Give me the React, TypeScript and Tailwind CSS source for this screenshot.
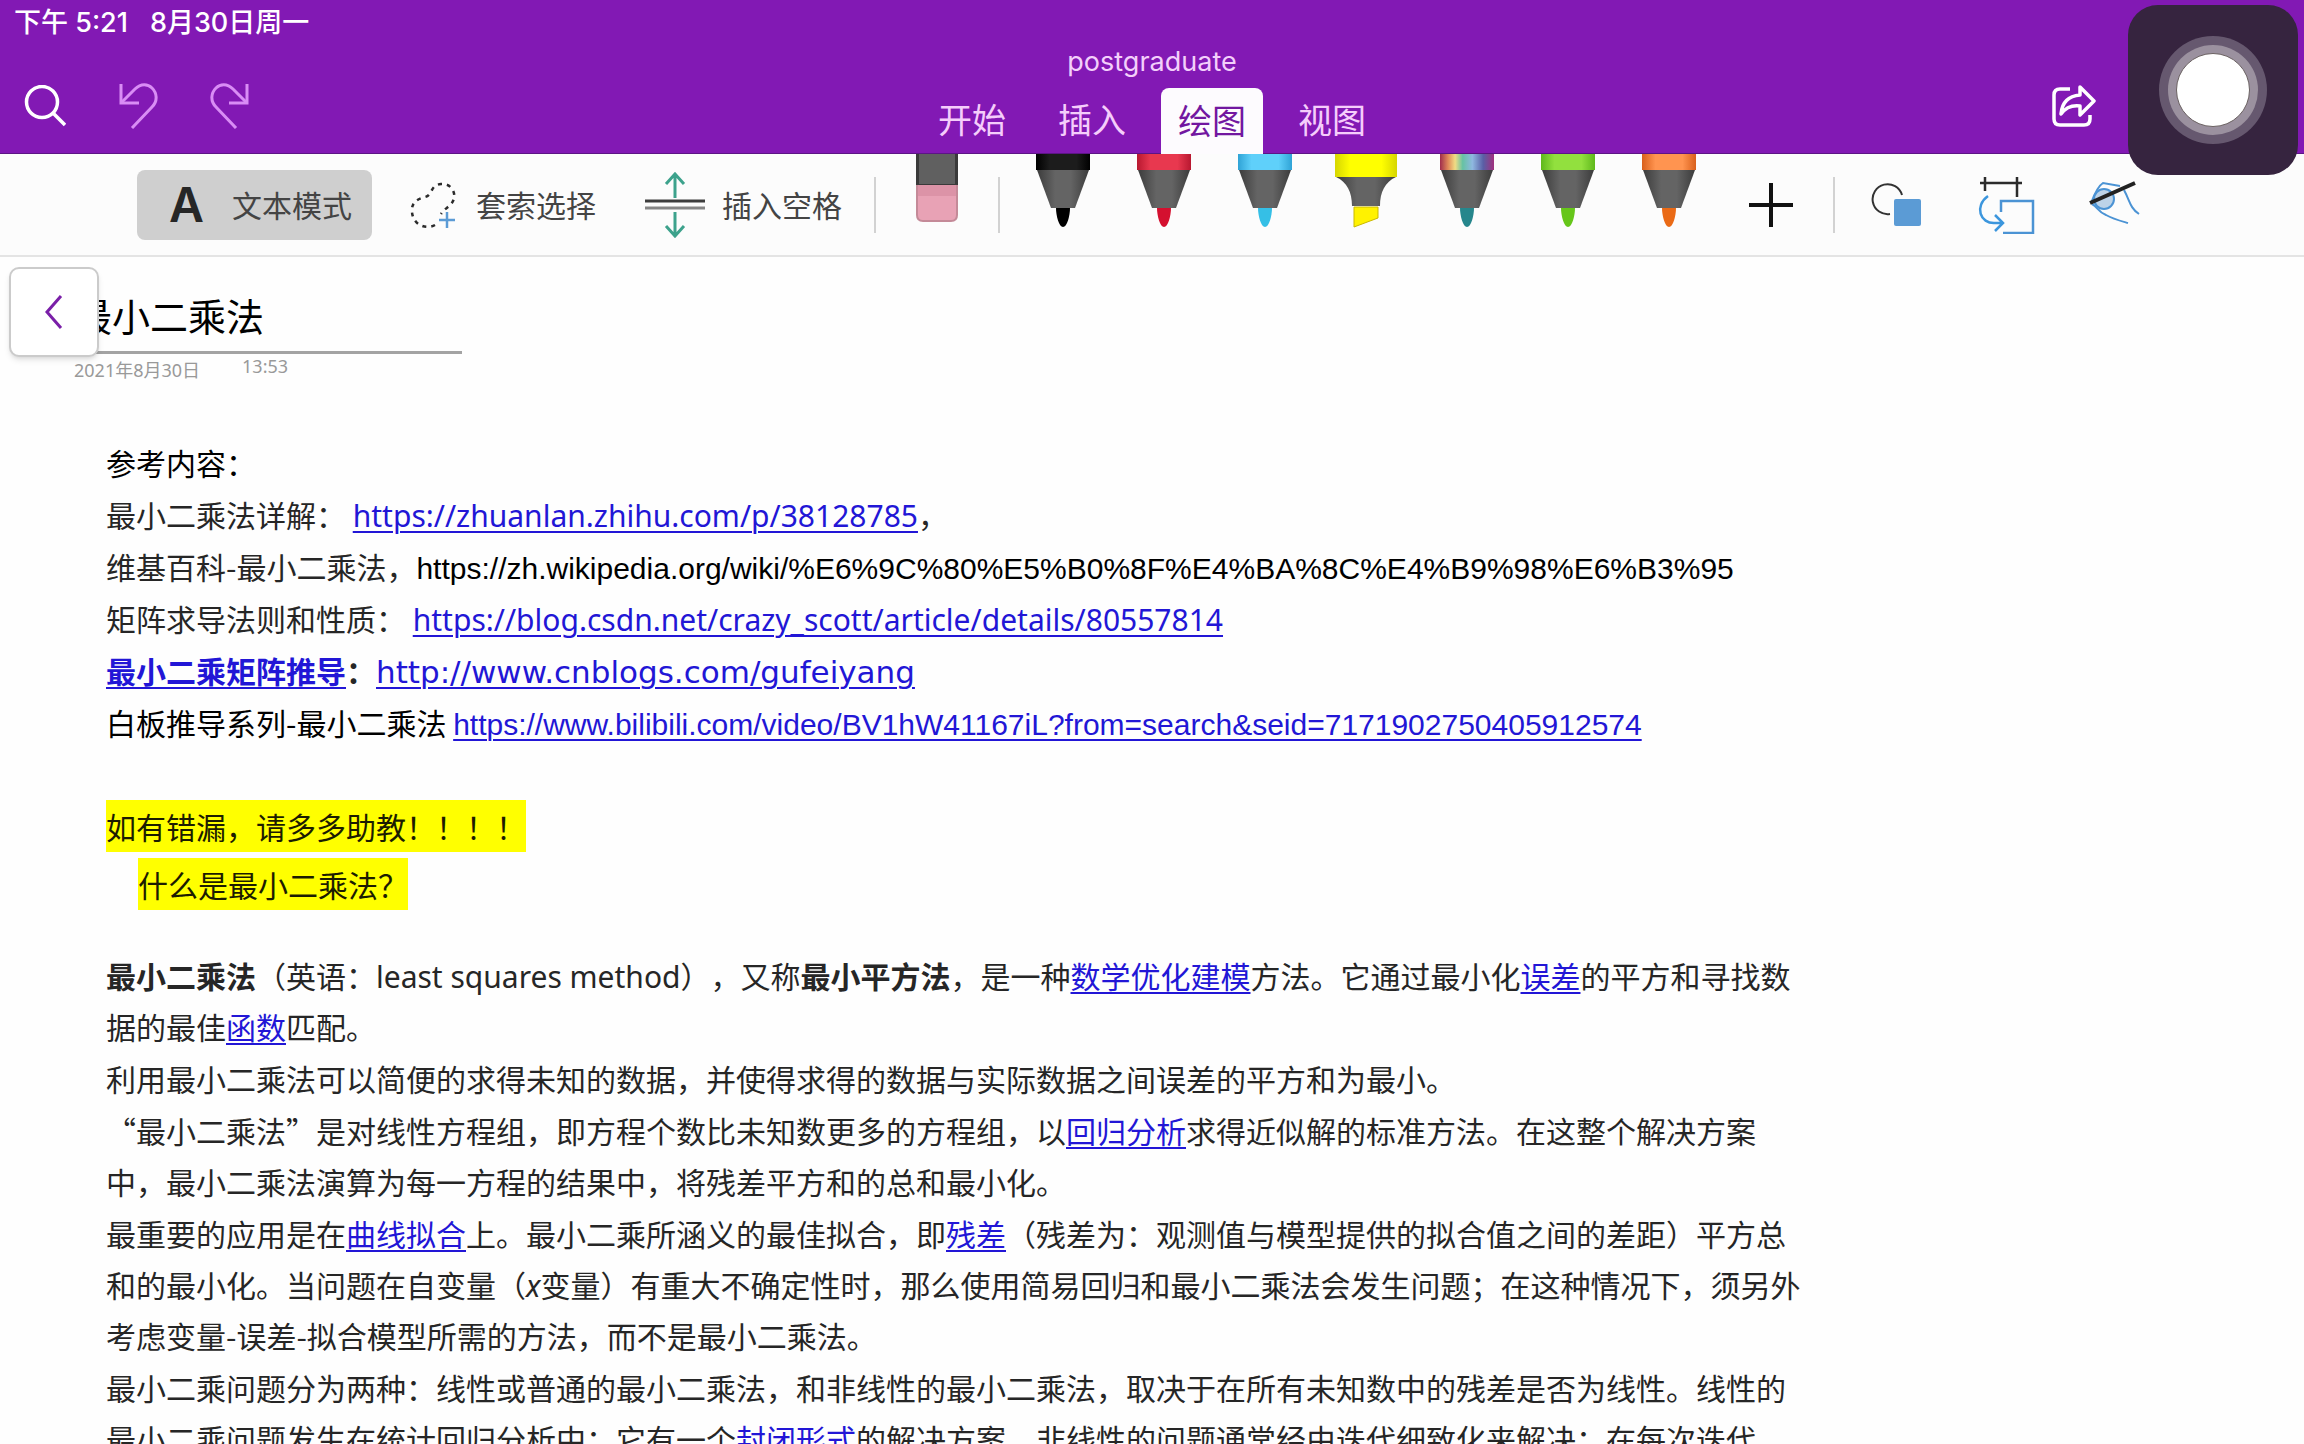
import type { ReactNode } from "react";

const tabs = ["开始", "插入", "绘图", "视图"];

const pens = [
  { name: "black", edge: "#000000", mid: "#1c1c1c", tip: "#000000" },
  { name: "red", edge: "#b81830", mid: "#e8384f", tip: "#d4102f" },
  { name: "blue", edge: "#2fa3d6", mid: "#5fd0fa", tip: "#35bfe6" },
  { name: "highlighter", edge: "#d6d600", mid: "#ffff00", tip: "#fff200" },
  { name: "rainbow", edge: "#8a2f6a", mid: "#8fc4dc", tip: "#26868c" },
  { name: "green", edge: "#5fb81c", mid: "#92e03e", tip: "#66c61a" },
  { name: "orange", edge: "#d9601c", mid: "#ff9450", tip: "#ea6a16" },
];

const Divider = () => <div className="h-14 w-[2px] shrink-0 bg-[#d2d2d2]" />;

const Pen = ({ name, edge, mid, tip }: (typeof pens)[number]) => (
  <svg viewBox="0 0 62 76" className="h-[76px] w-[62px]">
    <defs>
      <linearGradient id={`cap-${name}`}>
        {name === "rainbow" ? (
          <>
            <stop offset="0" stopColor="#a02c4c" />
            <stop offset="0.15" stopColor="#e08a5a" />
            <stop offset="0.28" stopColor="#f0dc84" />
            <stop offset="0.42" stopColor="#66c2a4" />
            <stop offset="0.6" stopColor="#8fb8e0" />
            <stop offset="0.8" stopColor="#5a5fa6" />
            <stop offset="1" stopColor="#a0307e" />
          </>
        ) : (
          <>
            <stop offset="0" stopColor={edge} />
            <stop offset="0.25" stopColor={mid} />
            <stop offset="0.75" stopColor={mid} />
            <stop offset="1" stopColor={edge} />
          </>
        )}
      </linearGradient>
      <linearGradient id={`body-${name}`}>
        <stop offset="0" stopColor="#3c3c3c" />
        <stop offset="0.35" stopColor="#646464" />
        <stop offset="0.65" stopColor="#646464" />
        <stop offset="1" stopColor="#3c3c3c" />
      </linearGradient>
    </defs>
    {name === "highlighter" ? (
      <>
        <path d="M0 0H62V23H0Z" fill={`url(#cap-${name})`} />
        <path d="M1 23H61C50 28 45 38 45 52H17C17 38 12 28 1 23Z" fill={`url(#body-${name})`} />
        <path d="M19 53H43V64L19 73Z" fill={tip} stroke="#c9b800" />
      </>
    ) : (
      <>
        <path d="M4 0H58V16H4Z" fill={`url(#cap-${name})`} />
        <path d="M5 16H57L43 54H19Z" fill={`url(#body-${name})`} />
        <path d="M24 54H38C38 62 35 73 31 73C27 73 24 62 24 54Z" fill={tip} />
      </>
    )}
  </svg>
);

const Link = ({ children, className = "" }: { children: ReactNode; className?: string }) => (
  <a
    href="#"
    className={`text-[#2216d6] underline decoration-2 underline-offset-4 ${className}`}
  >
    {children}
  </a>
);

const Header = () => (
  <header className="border-b border-[#5c1585] bg-[#8219b4] text-white">
    <div className="flex h-[46px] items-center gap-[22px] px-[14px] font-['Inter','Noto_Sans_CJK_SC',sans-serif] text-[27px] font-medium">
      <span>下午 5:21</span>
      <span>8月30日周一</span>
    </div>
    <div className="grid grid-cols-[1fr_auto_1fr]">
      <div className="flex items-center gap-[52px] pt-3 pl-6">
        <button aria-label="搜索">
          <svg viewBox="0 0 42 42" className="size-[42px]" fill="none" stroke="white" strokeWidth="3.5">
            <circle cx="18" cy="17" r="15.500" />
            <path d="M29 28L41 40" />
          </svg>
        </button>
        <button aria-label="撤消">
          <svg viewBox="0 0 40 46" className="h-[46px] w-10" fill="none" stroke="#d98df5" strokeWidth="3">
            <path d="M3 1V20H21" />
            <path d="M3 20L17 6C23 0 30 1 34 5C39 10 40 18 34 24L14 45" />
          </svg>
        </button>
        <button aria-label="重做">
          <svg viewBox="0 0 40 46" className="h-[46px] w-10" fill="none" stroke="#d98df5" strokeWidth="3">
            <path d="M37 1V20H19" />
            <path d="M37 20L23 6C17 0 10 1 6 5C1 10 0 18 6 24L26 45" />
          </svg>
        </button>
      </div>
      <div className="flex flex-col items-center">
        <p className="font-['Inter',sans-serif] text-[27px] leading-8 text-[#f3cffb]">postgraduate</p>
        <nav className="mt-[10px] flex gap-[18px] text-[34px]">
          {tabs.map((tab) => (
            <button
              key={tab}
              className={
                tab === "绘图"
                  ? "-mb-px h-[66px] rounded-t-lg bg-[#fdfbfe] px-[17px] pb-1 text-[#7217a0]"
                  : "h-[65px] px-[17px] pb-1 text-[#f5cdfb]"
              }
            >
              {tab}
            </button>
          ))}
        </nav>
      </div>
      <div className="flex items-center justify-end pt-3 pr-52">
        <button aria-label="共享">
          <svg viewBox="0 0 44 44" className="size-11" fill="none" stroke="white" strokeWidth="3.5" strokeLinejoin="round">
            <path d="M18 5H8Q2 5 2 11V35Q2 41 8 41H32Q38 41 38 35V31" />
            <path d="M28 3L42 17L28 31V22C20 21 14 23 9 30C10 18 16 12 28 11Z" />
          </svg>
        </button>
      </div>
    </div>
  </header>
);

const Toolbar = () => (
  <div className="flex h-[103px] items-center border-b-2 border-[#e4e4e4] bg-[#fcfcfc] pl-[137px] text-[30px] text-[#444]">
    <button className="flex h-[70px] items-center gap-7 rounded-lg bg-[#cfcfcf] pr-5 pl-8">
      <span className="w-[35px] text-center font-['Inter',sans-serif] text-[48px] font-semibold text-[#262626]">A</span>
      文本模式
    </button>
    <button className="ml-9 flex items-center gap-5">
      <svg viewBox="0 0 48 48" className="size-12" fill="none">
        <path
          d="M27 44C18 49 5 44 4 31C3 22 9 18 17 16C25 14 22 4 33 3C43 2 49 12 45 20C43 25 37 27 33 33"
          stroke="#2b2b2b"
          strokeWidth="2.5"
          strokeDasharray="4 5"
        />
        <path d="M39 31V47M31 39H47" stroke="#5b9bd5" strokeWidth="2.500" />
      </svg>
      套索选择
    </button>
    <button className="ml-12 flex items-center gap-4">
      <svg viewBox="0 0 62 66" className="h-[66px] w-[62px]" fill="none" strokeWidth="3">
        <path d="M31 2V26M22 12L31 2L40 12M31 40V64M22 54L31 64L40 54" stroke="#3da28c" />
        <path d="M1 29H61" stroke="#3d3d3d" />
        <path d="M1 36H61" stroke="#858585" />
      </svg>
      插入空格
    </button>
    <div className="ml-8">
      <Divider />
    </div>
    <button aria-label="橡皮擦" className="ml-10 self-start">
      <svg viewBox="0 0 42 70" className="h-[70px] w-[42px]">
        <path d="M1 26H41V61Q41 67 35 67H7Q1 67 1 61Z" fill="#e8a2b5" stroke="#c48a98" strokeWidth="2" />
        <path d="M2 27H40V42H2Z" fill="#dc93a7" />
        <path d="M0 0H42V31H0Z" fill="#3a3a3a" />
        <path d="M3 0H39V30H3Z" fill="#606060" />
      </svg>
    </button>
    <div className="ml-10">
      <Divider />
    </div>
    <div className="ml-3 flex self-start">
      {pens.map((pen) => (
        <button key={pen.name} aria-label={pen.name} className="flex w-[101px] justify-center">
          <Pen {...pen} />
        </button>
      ))}
    </div>
    <button aria-label="添加笔" className="ml-[30px]">
      <svg viewBox="0 0 44 44" className="size-11" stroke="#111" strokeWidth="4">
        <path d="M22 0V44M0 22H44" />
      </svg>
    </button>
    <div className="ml-10">
      <Divider />
    </div>
    <div className="ml-9 flex items-center gap-[54px]">
      <button aria-label="形状">
        <svg viewBox="0 0 52 46" className="h-[46px] w-[52px]" fill="none">
          <path d="M19 32A15 15 0 1 1 31 13" stroke="#333" strokeWidth="2" />
          <rect x="23" y="17" width="27" height="27" rx="2" fill="#5b9bd5" />
        </svg>
      </button>
      <button aria-label="墨迹转换为形状">
        <svg viewBox="0 0 58 58" className="size-[58px]" fill="none" strokeWidth="2.5">
          <path d="M3 7H45M8 1V15M40 1V21" stroke="#2b2b2b" />
          <path d="M24 36V25H56V57H26" stroke="#4b93d4" />
          <path d="M11 20C-3 30 3 48 18 47H26M18 39L26 47L18 55" stroke="#3c96dd" />
        </svg>
      </button>
      <button aria-label="用手指绘图" className="pb-1">
        <svg viewBox="0 0 52 44" className="h-11 w-[52px]" fill="none">
          <circle cx="15" cy="18" r="10" fill="#bdd3e8" stroke="#4b93d4" strokeWidth="2" />
          <path
            d="M2 22C5 14 9 5 14 2L31 5M35 9C41 20 41 27 50 33M3 23C9 26 9 31 17 34C24 38 32 40 39 42"
            stroke="#4b93d4"
            strokeWidth="2"
          />
          <path d="M1 22L46 2" stroke="#222" strokeWidth="4" />
        </svg>
      </button>
    </div>
  </div>
);

const NoteTitle = () => (
  <div className="pt-[30px] pl-[74px]">
    <div className="w-[388px] border-b-[3px] border-[#a3a3a3] pb-2">
      <h1 className="text-[38px] leading-[56px] text-black">最小二乘法</h1>
    </div>
    <div className="flex gap-[42px] font-['Noto_Sans','Noto_Sans_CJK_SC',sans-serif] text-[18px] leading-6 text-[#999]">
      <span className="pt-1">2021年8月30日</span>
      <span>13:53</span>
    </div>
  </div>
);

const References = () => (
  <div className="leading-[52px]">
    <p className="text-black">参考内容：</p>
    <p>
      最小二乘法详解：{" "}
      <Link className="font-['Noto_Sans',sans-serif] leading-8">https://zhuanlan.zhihu.com/p/38128785</Link>，
    </p>
    <p>
      维基百科-最小二乘法，
      <span className="font-['Liberation_Sans',sans-serif] leading-8 text-black">
        https://zh.wikipedia.org/wiki/%E6%9C%80%E5%B0%8F%E4%BA%8C%E4%B9%98%E6%B3%95
      </span>
    </p>
    <p>
      矩阵求导法则和性质：{" "}
      <Link className="font-['Noto_Sans',sans-serif] leading-8">
        https://blog.csdn.net/crazy_scott/article/details/80557814
      </Link>
    </p>
    <p>
      <Link className="font-bold">最小二乘矩阵推导</Link>
      <b>：</b>
      <Link className="font-['DejaVu_Sans',sans-serif] text-[31px] leading-8">http://www.cnblogs.com/gufeiyang</Link>
    </p>
    <p className="text-black">
      白板推导系列-最小二乘法{" "}
      <Link className="font-['Liberation_Sans',sans-serif] leading-8">
        https://www.bilibili.com/video/BV1hW41167iL?from=search&seid=7171902750405912574
      </Link>
    </p>
  </div>
);

const Article = () => (
  <div className="mt-10 flex max-w-[1700px] flex-col gap-px leading-[51px] [text-spacing-trim:space-all]">
    <p>
      <b>最小二乘法</b>（英语：
      <span className="font-['Noto_Sans',sans-serif] leading-8">least squares method</span>），又称
      <b>最小平方法</b>，是一种<Link>数学优化建模</Link>方法。它通过最小化<Link>误差</Link>
      的平方和寻找数据的最佳<Link>函数</Link>匹配。
    </p>
    <p>利用最小二乘法可以简便的求得未知的数据，并使得求得的数据与实际数据之间误差的平方和为最小。</p>
    <p>
      “最小二乘法”是对线性方程组，即方程个数比未知数更多的方程组，以<Link>回归分析</Link>
      求得近似解的标准方法。在这整个解决方案中，最小二乘法演算为每一方程的结果中，将残差平方和的总和最小化。
    </p>
    <p>
      最重要的应用是在<Link>曲线拟合</Link>上。最小二乘所涵义的最佳拟合，即<Link>残差</Link>
      （残差为：观测值与模型提供的拟合值之间的差距）平方总和的最小化。当问题在自变量（
      <i className="font-['Noto_Sans',sans-serif] leading-8">x</i>
      变量）有重大不确定性时，那么使用简易回归和最小二乘法会发生问题；在这种情况下，须另外考虑变量-误差-拟合模型所需的方法，而不是最小二乘法。
    </p>
    <p>
      最小二乘问题分为两种：线性或普通的最小二乘法，和非线性的最小二乘法，取决于在所有未知数中的残差是否为线性。线性的最小二乘问题发生在统计回归分析中；它有一个
      <Link>封闭形式</Link>的解决方案。非线性的问题通常经由迭代细致化来解决；在每次迭代
    </p>
  </div>
);

export default function App() {
  return (
    <div
      lang="zh-CN"
      className="relative flex h-screen flex-col overflow-hidden bg-white font-['Noto_Sans_CJK_SC',sans-serif]"
    >
      <Header />
      <Toolbar />
      <main className="relative min-h-0 flex-1 overflow-hidden bg-[#fefefe]">
        <button
          aria-label="返回"
          className="absolute top-[10px] left-[9px] flex size-[90px] items-center justify-center rounded-[10px] border-2 border-[#cbcbcb] bg-white shadow-md"
        >
          <svg viewBox="0 0 18 34" className="h-[34px] w-[18px]" fill="none" stroke="#7a1fa8" strokeWidth="3">
            <path d="M16 1L2 17L16 33" />
          </svg>
        </button>
        <NoteTitle />
        <article className="mt-[54px] pl-[106px] text-[30px] text-[#262626]">
          <References />
          <div className="mt-[52px] flex flex-col items-start gap-[6px] leading-[52px] text-[#1c1c00]">
            <p className="bg-[#ffff00]">如有错漏，请多多助教！！！！</p>
            <h2 className="ml-8 bg-[#ffff00]">什么是最小二乘法？</h2>
          </div>
          <Article />
        </article>
      </main>
      <button
        aria-label="辅助触控"
        className="absolute top-[5px] right-[6px] flex size-[170px] items-center justify-center rounded-[30px] bg-[#36243f]"
      >
        <span className="flex size-[108px] items-center justify-center rounded-full bg-[#66586f]">
          <span className="flex size-[90px] items-center justify-center rounded-full bg-[#9b919f]">
            <span className="size-[74px] rounded-full border border-[#6b6262] bg-white" />
          </span>
        </span>
      </button>
    </div>
  );
}
